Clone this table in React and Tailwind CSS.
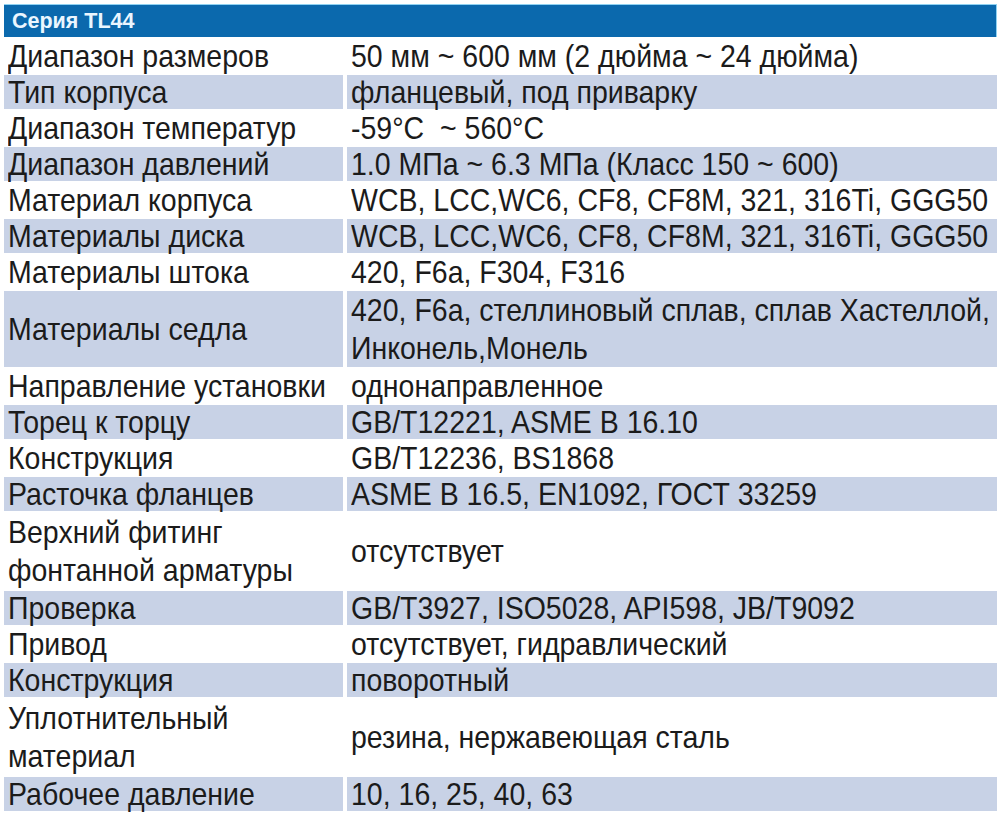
const rows = [
  { label: "Диапазон размеров", value: "50 мм ~ 600 мм (2 дюйма ~ 24 дюйма)" },
  { label: "Тип корпуса", value: "фланцевый, под приварку" },
  { label: "Диапазон температур", value: "-59°C  ~ 560°C" },
  { label: "Диапазон давлений", value: "1.0 МПа ~ 6.3 МПа (Класс 150 ~ 600)" },
  { label: "Материал корпуса", value: "WCB, LCC,WC6, CF8, CF8M, 321, 316Ti, GGG50" },
  { label: "Материалы диска", value: "WCB, LCC,WC6, CF8, CF8M, 321, 316Ti, GGG50" },
  { label: "Материалы штока", value: "420, F6a, F304, F316" },
  {
    label: "Материалы седла",
    value: "420, F6a, стеллиновый сплав, сплав Хастеллой,\nИнконель,Монель",
    tall: true,
  },
  { label: "Направление установки", value: "однонаправленное" },
  { label: "Торец к торцу", value: "GB/T12221, ASME B 16.10" },
  { label: "Конструкция", value: "GB/T12236, BS1868" },
  { label: "Расточка фланцев", value: "ASME B 16.5, EN1092, ГОСТ 33259" },
  { label: "Верхний фитинг\nфонтанной арматуры", value: "отсутствует", tall: true },
  { label: "Проверка", value: "GB/T3927, ISO5028, API598, JB/T9092" },
  { label: "Привод", value: "отсутствует, гидравлический" },
  { label: "Конструкция", value: "поворотный" },
  { label: "Уплотнительный\nматериал", value: "резина, нержавеющая сталь", tall: true },
  { label: "Рабочее давление", value: "10, 16, 25, 40, 63" },
];

function Cell({ text, shaded, tall }) {
  return (
    <div
      className={`flex items-center px-[4px] ${tall ? "h-[76px]" : "h-[34px]"} ${
        shaded ? "bg-[#c8d2e6]" : "bg-white"
      }`}
    >
      <div className="whitespace-pre leading-[34px] scale-y-[1.12] origin-center">
        {text}
      </div>
    </div>
  );
}

export default function App() {
  return (
    <div
      className="w-[1000px] h-[817px] bg-white pt-[4px] pl-[4px] text-[#1b1b1b] overflow-hidden"
      style={{ fontFamily: '"Liberation Sans", Arial, sans-serif' }}
    >
      <div className="w-[993px] flex flex-col gap-[2px]">
        <div className="h-[33px] bg-[#0b69ad] border-t border-r border-[#8fd2f2] flex items-center pl-[8px]">
          <span className="text-[21.5px] font-bold text-[#eaf6ff]">Серия TL44</span>
        </div>
        {rows.map((r, i) => {
          const shaded = i % 2 === 1;
          return (
            <div key={i} className="grid grid-cols-[339px_1fr] gap-x-[4px] text-[28.5px]">
              <Cell text={r.label} shaded={shaded} tall={r.tall} />
              <Cell text={r.value} shaded={shaded} tall={r.tall} />
            </div>
          );
        })}
      </div>
    </div>
  );
}
